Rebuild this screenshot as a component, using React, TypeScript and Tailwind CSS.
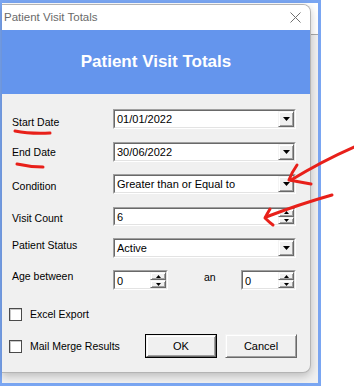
import type { ReactNode } from "react";

const font = "font-['Liberation_Sans',Arial,sans-serif]";

/** Classic Win32 sunken edit frame (two-pixel 3D border). */
function Sunken({ width, height = 20, children }: { width: number; height?: number; children: ReactNode }) {
  return (
    <div
      className="border border-t-[#a0a0a0] border-l-[#a0a0a0] border-b-white border-r-white"
      style={{ width, height }}
    >
      <div className="h-full w-full flex items-stretch bg-white border border-t-[#696969] border-l-[#696969] border-b-[#e3e3e3] border-r-[#e3e3e3]">
        {children}
      </div>
    </div>
  );
}

function RaisedBox({ className = "", children }: { className?: string; children?: ReactNode }) {
  return (
    <div
      className={`flex items-center justify-center bg-[#f0f0f0] border border-t-[#f4f4f4] border-l-[#f4f4f4] border-b-[#696969] border-r-[#696969] shadow-[inset_1px_1px_0_#ffffff,inset_-1px_-1px_0_#a0a0a0] ${className}`}
    >
      {children}
    </div>
  );
}

function Down({ w = 7, h = 4 }: { w?: number; h?: number }) {
  return (
    <svg width={w} height={h} viewBox={`0 0 ${w} ${h}`}>
      <path d={`M0 0H${w}L${w / 2} ${h}Z`} fill="#000" />
    </svg>
  );
}

function Up({ w = 5, h = 3 }: { w?: number; h?: number }) {
  return (
    <svg width={w} height={h} viewBox={`0 0 ${w} ${h}`}>
      <path d={`M0 ${h}H${w}L${w / 2} 0Z`} fill="#000" />
    </svg>
  );
}

function Combo({ value }: { value: string }) {
  return (
    <Sunken width={183}>
      <span className="flex-1 pl-[2px] text-[11px] leading-none flex items-center text-black">{value}</span>
      <RaisedBox className="w-[16px] h-full">
        <Down />
      </RaisedBox>
    </Sunken>
  );
}

function Spin({ value, width, height = 20 }: { value: string; width: number; height?: number }) {
  return (
    <Sunken width={width} height={height}>
      <span className="flex-1 pl-[2px] text-[11px] leading-none flex items-center text-black pt-[2px]">{value}</span>
      <div className="w-[16px] flex flex-col">
        <RaisedBox className="flex-1">
          <Up />
        </RaisedBox>
        <RaisedBox className="flex-1">
          <Down w={5} h={3} />
        </RaisedBox>
      </div>
    </Sunken>
  );
}

function Row({ label, mt, labelShift, children }: { label: string; mt: number; labelShift: string; children: ReactNode }) {
  return (
    <div className="flex items-center pl-[10px]" style={{ marginTop: mt }}>
      <span className={`w-[101px] text-[10.5px] leading-none text-black ${labelShift}`}>{label}</span>
      {children}
    </div>
  );
}

function Check({ label }: { label: string }) {
  return (
    <div className="flex items-center gap-[8px]">
      <span className="w-[13px] h-[13px] bg-white border border-[#4a4a4a] shadow-[inset_1px_1px_0_#c8c8c8]" />
      <span className="text-[10.5px] leading-none text-black">{label}</span>
    </div>
  );
}

function Button({ label, primary }: { label: string; primary?: boolean }) {
  return (
    <div className={`w-[72px] h-[24px] ${primary ? "border border-black" : ""}`}>
      <RaisedBox className="w-full h-full">
        <span className="text-[11px] leading-none text-black">{label}</span>
      </RaisedBox>
    </div>
  );
}

export default function App() {
  return (
    <div className={`relative w-[354px] h-[386px] bg-white overflow-hidden ${font}`}>
      {/* screenshot frame with the window behind the dialog */}
      <div className="w-[321px] h-[386px] border-[#7aa6f2] border-l-[2px] border-t-[3px] border-r-[3px] border-b-[3px] bg-[linear-gradient(to_bottom,#ffffff_31px,#a8a8a8_31px,#a8a8a8_32px,#f0f0f0_32px)]">
        <div className="mt-[1px] w-[309px] rounded-[8px] rounded-tl-none rounded-bl-none border border-l-0 border-[#b4b4b4] bg-[#f0f0f0] shadow-[0_3px_8px_rgba(0,0,0,0.22)] overflow-hidden">
          {/* title bar */}
          <div className="h-[25px] bg-white flex items-center justify-between pl-[2px] pr-[9px]">
            <span className="text-[11.5px] text-[#6a6a6a] leading-none">Patient Visit Totals</span>
            <svg width="11" height="11" viewBox="0 0 11 11">
              <path d="M0.5 0.5L10.5 10.5M10.5 0.5L0.5 10.5" stroke="#707070" strokeWidth="1" />
            </svg>
          </div>

          {/* header band */}
          <div className="h-[64px] bg-[#6495ed] flex items-center justify-center">
            <span className="text-[17px] font-bold text-white leading-none -mt-[1px]">Patient Visit Totals</span>
          </div>

          {/* form body */}
          <div className="pt-[15px] pb-[14px]">
            <Row label="Start Date" mt={0} labelShift="mt-[7px]">
              <Combo value="01/01/2022" />
            </Row>
            <Row label="End Date" mt={13} labelShift="mt-[1px]">
              <Combo value="30/06/2022" />
            </Row>
            <Row label="Condition" mt={12} labelShift="mt-[4px]">
              <Combo value="Greater than or Equal to" />
            </Row>
            <Row label="Visit Count" mt={13} labelShift="mt-[4px]">
              <Spin value="6" width={183} height={19} />
            </Row>
            <Row label="Patient Status" mt={12} labelShift="mb-[6px]">
              <Combo value="Active" />
            </Row>
            <Row label="Age between" mt={12} labelShift="mb-[7px]">
              <Spin value="0" width={55} />
              <span className="ml-[36px] w-[37px] text-[10.5px] leading-none mb-[6px]">an</span>
              <Spin value="0" width={55} />
            </Row>

            <div className="pl-[7px] mt-[18px]">
              <Check label="Excel Export" />
            </div>
            <div className="pl-[7px] mt-[13px] flex items-center">
              <div className="w-[136px]">
                <Check label="Mail Merge Results" />
              </div>
              <Button label="OK" primary />
              <div className="ml-[8px]">
                <Button label="Cancel" />
              </div>
            </div>
          </div>
        </div>
      </div>

      {/* red hand-drawn annotations over the screenshot */}
      <svg className="absolute inset-0 pointer-events-none" width="354" height="386" viewBox="0 0 354 386">
        <g fill="none" stroke="#e8201a" strokeWidth="3" strokeLinecap="round" strokeLinejoin="round">
          <path d="M15 131Q30 134 50 133" />
          <path d="M17 164Q30 167 43 167" />
          <path d="M354 147Q322 161 291 180" />
          <path d="M297 165Q292 172 289 180Q300 182 311 184" />
          <path d="M332 195Q300 204 266 217" />
          <path d="M270 209Q267 214 265 218Q269 222 273 225" />
        </g>
      </svg>
    </div>
  );
}
